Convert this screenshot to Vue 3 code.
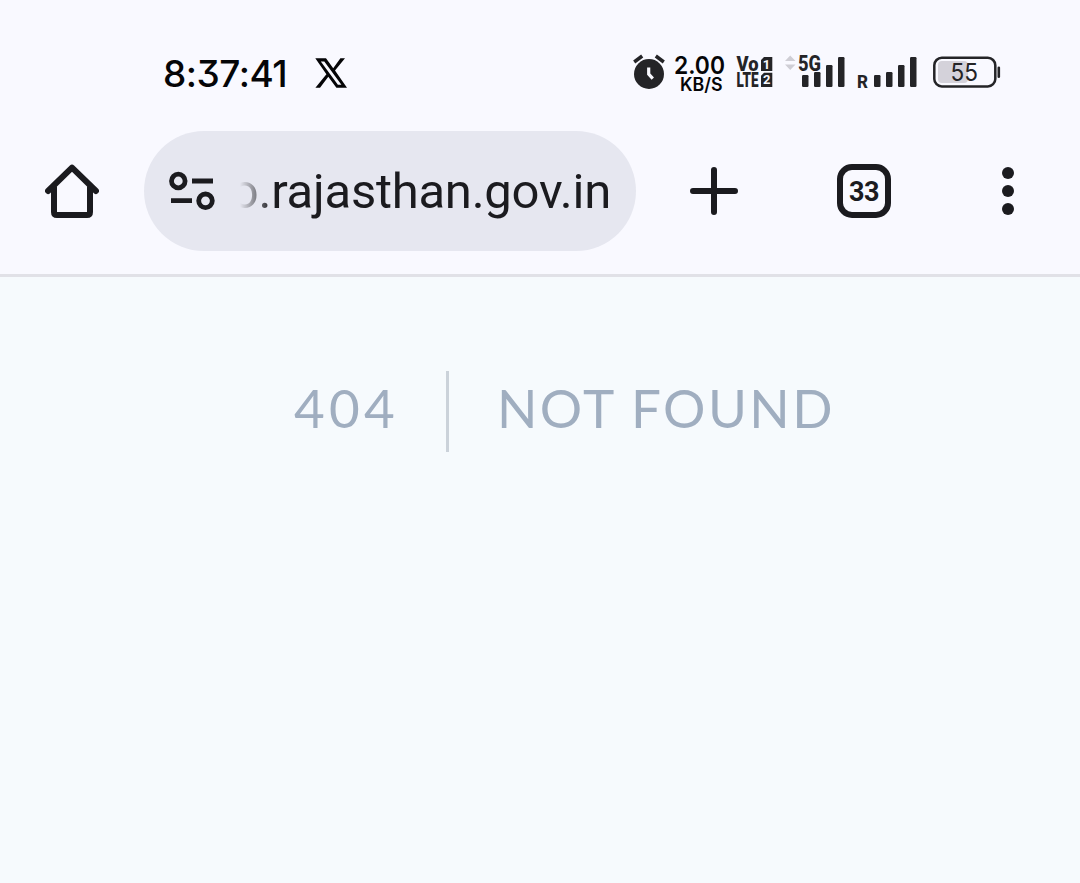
<template>
  <div class="screen">
    <header class="browser">
      <div class="status-bar">
        <span class="clock">{{ time }}</span>
        <svg class="x-logo" viewBox="0 0 32 30" width="32" height="30">
          <path fill-rule="evenodd" d="M.3 .3H11L18.2 10.2 25.4 .3H30L20 12.6 32 29.7H21.4L13.3 18.8 5 29.7H.4L11.4 16.2ZM5.8 3.4 22.9 26.7H26.4L9.3 3.4Z" />
        </svg>

        <svg class="alarm" viewBox="0 0 32 36" width="32" height="36">
          <circle cx="16" cy="20" r="15" />
          <path class="line" d="M1.2 8 9.2 2M22.8 2 30.8 8" />
          <path class="hand" d="M15.7 13.5V20.2L19.8 24.6" />
        </svg>

        <svg class="speed" viewBox="0 0 52 40" width="52" height="40">
          <text class="rate" x="0" y="19.5" textLength="51" lengthAdjust="spacingAndGlyphs">2.00</text>
          <text class="unit" x="6" y="36.6" textLength="42.5" lengthAdjust="spacingAndGlyphs">KB/S</text>
        </svg>

        <svg class="volte" viewBox="0 0 36 32" width="36" height="32">
          <text class="dense" x="-.5" y="15" textLength="22" lengthAdjust="spacingAndGlyphs">Vo</text>
          <text class="dense" x="-.5" y="30.8" textLength="22" lengthAdjust="spacingAndGlyphs">LTE</text>
          <path d="M27 1H35.3V15H24V4ZM27 16.8H35.3V31H24V19.8Z" />
          <text class="sim" x="29.5" y="12.6" text-anchor="middle">1</text>
          <text class="sim" x="29.7" y="28.4" text-anchor="middle">2</text>
        </svg>

        <svg class="signal-5g" viewBox="0 0 60 34" width="60" height="34">
          <path class="faint" d="M0 7 5.2 1.5 10.5 7ZM0 10.5H10.5L5.2 16Z" />
          <text class="gen" x="13" y="16.8" textLength="23" lengthAdjust="spacingAndGlyphs">5G</text>
          <rect v-for="bar in bars" :key="bar.x" :x="bar.x" :y="33 - bar.h" width="6.5" :height="bar.h" rx="1.2" />
        </svg>

        <svg class="signal-r" viewBox="0 0 60 34" width="60" height="34">
          <text class="roam" x="0" y="34" textLength="11" lengthAdjust="spacingAndGlyphs">R</text>
          <rect v-for="bar in bars" :key="bar.x" :x="bar.x" :y="33 - bar.h" width="6.5" :height="bar.h" rx="1.2" />
        </svg>

        <svg class="battery" viewBox="0 0 68 32" width="68" height="32">
          <rect class="charge" x="5" y="5" width="30" height="22" rx="4" />
          <rect class="shell" x="1.3" y="1.8" width="61" height="28.6" rx="7.5" />
          <rect x="64.5" y="10.5" width="2.6" height="11.5" rx="1.3" />
          <text class="percent" x="31.2" y="25" text-anchor="middle" textLength="27.5" lengthAdjust="spacingAndGlyphs">{{ battery }}</text>
        </svg>
      </div>

      <div class="toolbar">
        <svg class="home" viewBox="0 0 54 54" width="54" height="54">
          <path d="M3 27 27 3.6 51 27M9 23V48Q9 51 12 51H42Q45 51 45 48V23" />
        </svg>

        <div class="omnibox">
          <svg class="tune" viewBox="0 0 46 40" width="46" height="40">
            <circle cx="9.3" cy="10" r="6.8" />
            <circle cx="36.5" cy="29.8" r="6.8" />
            <path d="M23 10H44M2 29.6H23" />
          </svg>
          <div class="url"><span>{{ host }}</span></div>
        </div>

        <svg class="plus" viewBox="0 0 48 48" width="48" height="48">
          <path d="M24 3V45M3 24H45" />
        </svg>
        <div class="tabs"><span>{{ tabCount }}</span></div>
        <svg class="more" viewBox="0 0 12 48" width="12" height="48">
          <circle cx="6" cy="6" r="6" />
          <circle cx="6" cy="24" r="6" />
          <circle cx="6" cy="42" r="6" />
        </svg>
      </div>
    </header>

    <main class="page">
      <div class="error">
        <div class="code">404</div>
        <div class="message">Not Found</div>
      </div>
    </main>
  </div>
</template>

<script setup>
import { ref } from 'vue';

const time = ref('8:37:41');
const battery = ref(55);
const tabCount = ref(33);
const host = ref('o.rajasthan.gov.in');

// both SIM meters use the same four bars
const bars = [
  { x: 17, h: 12 },
  { x: 29, h: 15 },
  { x: 41, h: 22 },
  { x: 53, h: 30 },
];
</script>

<style>
body {
  background: #f6fafd;
}
</style>

<style scoped>
.screen {
  display: flex;
  flex-direction: column;
  height: 883px;
  overflow: hidden;
  background: #f6fafd;
  font-family: Roboto, "Liberation Sans", sans-serif;
  color: #1b1b1f;
}

.browser {
  box-sizing: border-box;
  height: 277px;
  background: #f9f9ff;
  border-bottom: 3px solid #e1e1e7;
}

.status-bar {
  display: flex;
  align-items: flex-start;
  box-sizing: border-box;
  height: 131px;
  padding: 54px 0 0 163px;
  fill: #242427;
}
.status-bar svg {
  display: block;
  flex: none;
  overflow: visible;
}

.clock {
  width: 152px;
  margin-top: -2px;
  font-family: Inter, sans-serif;
  font-size: 37px;
  line-height: 44px;
  font-weight: 450;
  font-feature-settings: "cv09";
  letter-spacing: -0.5px;
  color: #050507;
}
.x-logo {
  margin-top: 4px;
  fill: #050507;
}
.alarm {
  margin-left: 286px;
}
.alarm .line {
  stroke: #242427;
  stroke-width: 3.5;
}
.alarm .hand {
  fill: none;
  stroke: #f9f9ff;
  stroke-width: 3.2;
}

.speed {
  margin-left: 9px;
}
.speed text {
  font-family: Inter, sans-serif;
  font-weight: 600;
  fill: #050507;
}
.rate {
  font-size: 24.5px;
}
.unit {
  font-size: 18.5px;
}

.volte {
  margin: 2px 0 0 11px;
}
.dense {
  font-size: 20px;
  font-weight: 900;
}
.sim {
  font-size: 13px;
  font-weight: 700;
  fill: #f9f9ff;
}

.signal-5g {
  margin-left: 12px;
}
.faint {
  fill: #cfced5;
}
.gen {
  font-size: 22px;
  font-weight: 800;
}
.signal-r {
  margin-left: 12px;
}
.roam {
  font-size: 18px;
  font-weight: 800;
}

.battery {
  margin: 2px 0 0 16px;
}
.charge {
  fill: #d4d2da;
}
.shell {
  fill: none;
  stroke: #242427;
  stroke-width: 2.5;
}
.percent {
  font-family: Inter, sans-serif;
  font-size: 24px;
}

.toolbar {
  display: flex;
  align-items: center;
  height: 120px;
  padding-left: 45px;
}
.toolbar svg {
  display: block;
  flex: none;
}
.home,
.plus {
  fill: none;
  stroke: #1b1b1f;
  stroke-width: 6;
  stroke-linecap: round;
  stroke-linejoin: round;
}
.plus {
  margin-left: 54px;
}

.omnibox {
  display: flex;
  align-items: center;
  box-sizing: border-box;
  width: 492px;
  height: 120px;
  margin-left: 45px;
  padding-left: 25px;
  border-radius: 60px;
  background: #e6e7f0;
}
.tune {
  fill: none;
  stroke: #1b1b1f;
  stroke-width: 4.8;
}
.url {
  display: flex;
  justify-content: flex-end;
  width: 371px;
  margin-left: 25px;
  padding-top: 2px;
  overflow: hidden;
  font-size: 49px;
  line-height: 70px;
  letter-spacing: -0.25px;
  white-space: nowrap;
  mask-image: linear-gradient(to right, transparent 0, #000 32px);
}

.tabs {
  display: flex;
  align-items: center;
  justify-content: center;
  box-sizing: border-box;
  width: 54px;
  height: 54px;
  margin-left: 99px;
  padding-top: 1px;
  border: 6px solid #1b1b1f;
  border-radius: 15px;
  font-size: 27px;
  font-weight: 700;
  letter-spacing: -0.4px;
}
.more {
  margin-left: 111px;
  fill: #1b1b1f;
}

.page {
  flex: 1;
  padding-top: 94px;
}
.error {
  display: flex;
  height: 81px;
  padding-left: 294px;
  font-family: Lato, sans-serif;
  font-size: 53px;
  line-height: 73px;
  text-transform: uppercase;
  white-space: nowrap;
  color: #a0aec0;
}
.code {
  box-sizing: border-box;
  width: 155px;
  height: 81px;
  border-right: 3px solid #cbd2da;
  letter-spacing: 4.3px;
}
.message {
  margin-left: 48px;
  letter-spacing: 2.4px;
}
</style>
